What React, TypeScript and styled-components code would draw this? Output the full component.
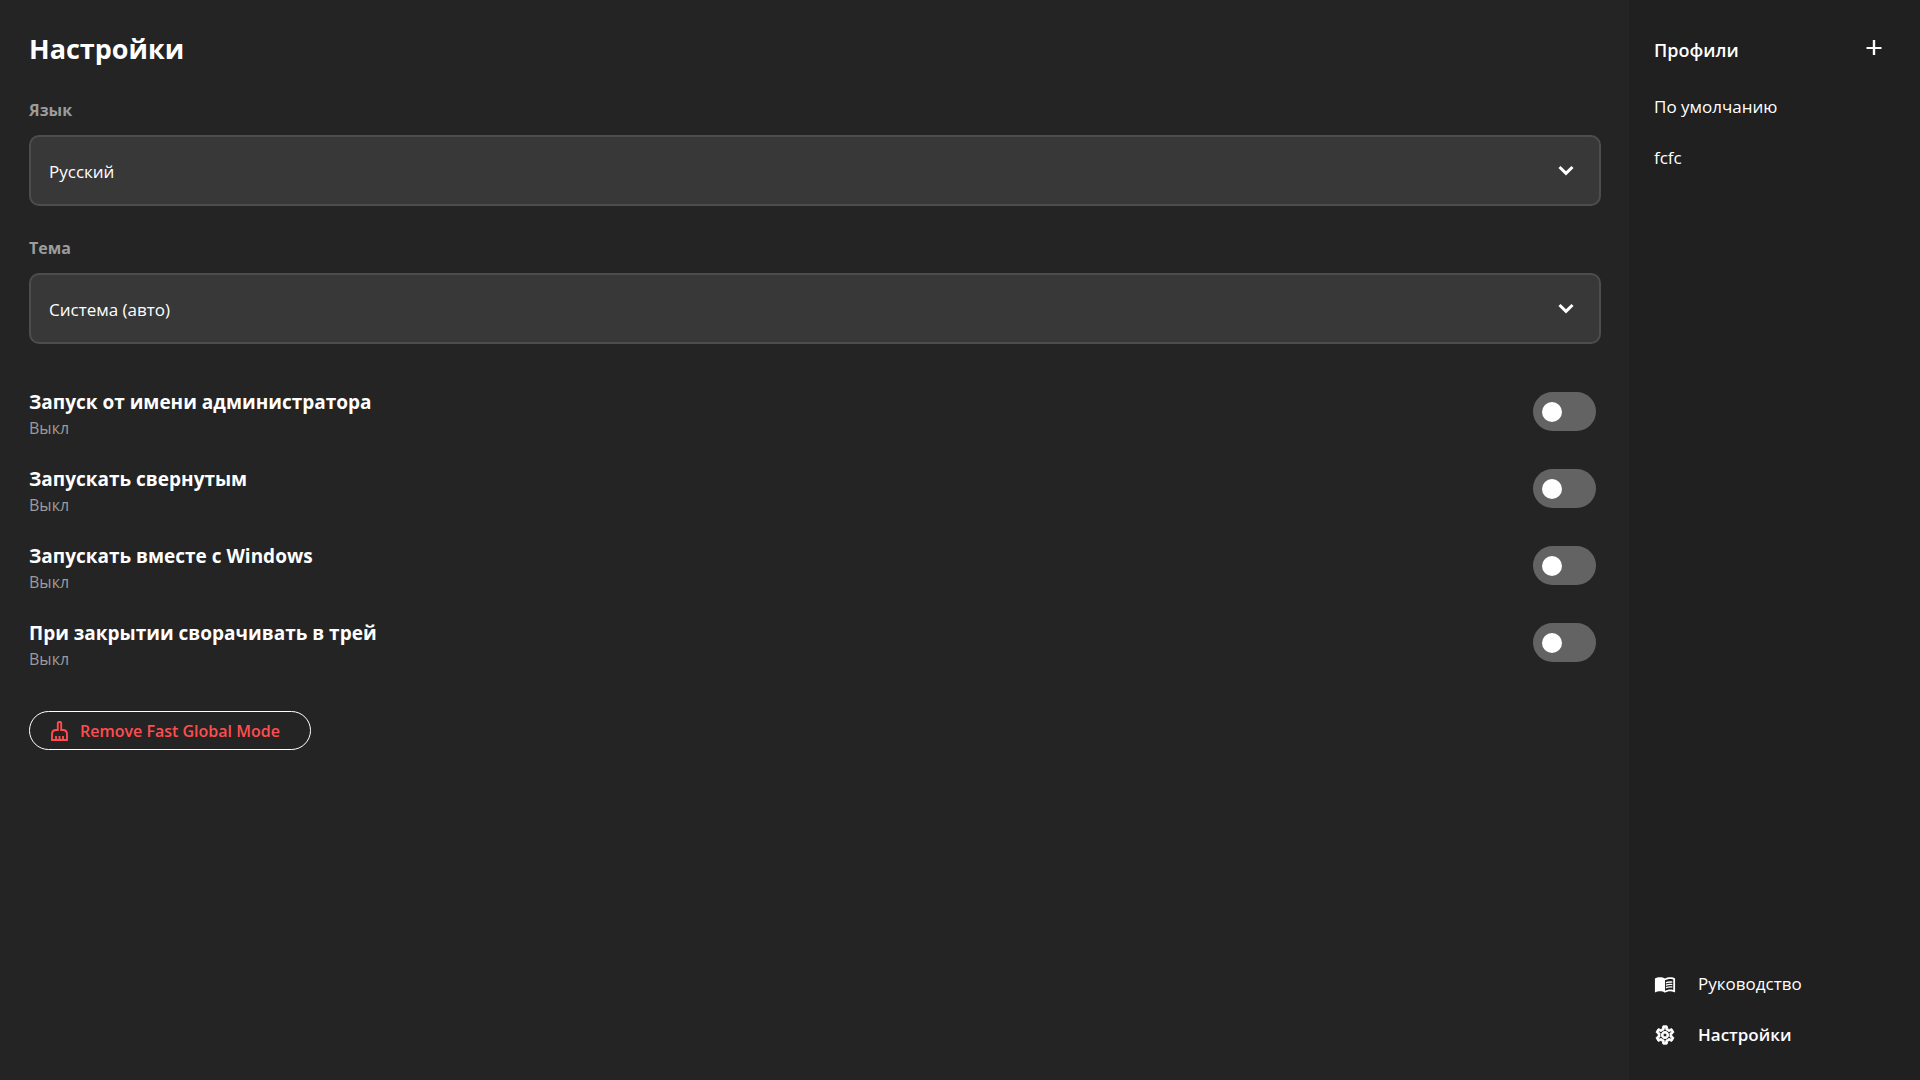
import React, { useState } from "react";
import styled, { createGlobalStyle } from "styled-components";
import { MdMenuBook, MdOutlineSettings } from "react-icons/md";

const GlobalStyle = createGlobalStyle`
  *, *::before, *::after { box-sizing: border-box; }
  body {
    margin: 0;
    background: #242424;
    color: #fff;
    font-family: "Open Sans", "Noto Sans", sans-serif;
    font-size: 17px;
    line-height: 24px;
  }
  button, select { font: inherit; color: inherit; }
`;

const Layout = styled.div`
  display: flex;
  min-height: 100vh;
`;

const Main = styled.main`
  flex: 1;
  min-width: 0;
  padding: 30px 28px 28px 29px;
`;

const Title = styled.h1`
  margin: 0;
  font-size: 27px;
  line-height: 38px;
  font-weight: 700;
`;

const Field = styled.div`
  display: flex;
  flex-direction: column;
  gap: 13px;
  margin-top: 30px;
`;

const FieldLabel = styled.label`
  color: #9c9c9c;
  font-size: 16px;
  font-weight: 700;
`;

const SelectBox = styled.div`
  display: grid;
  align-items: center;

  > * { grid-area: 1 / 1; }
  > svg {
    justify-self: end;
    margin-right: 27px;
    pointer-events: none;
  }
`;

const Select = styled.select`
  appearance: none;
  width: 100%;
  height: 71px;
  padding: 2px 64px 0 18px;
  border: 2px solid #4d4d4d;
  border-radius: 10px;
  background: #383838;
`;

const Toggles = styled.div`
  display: flex;
  flex-direction: column;
  gap: 25px;
  margin-top: 45px;
`;

const ToggleRow = styled.div`
  display: flex;
  align-items: flex-start;
  justify-content: space-between;
  padding-right: 5px;
`;

const ToggleText = styled.label`
  display: flex;
  flex-direction: column;
`;

const ToggleName = styled.span`
  font-size: 19px;
  line-height: 27px;
  font-weight: 700;
`;

const ToggleState = styled.span`
  color: #9c9c9c;
  font-size: 16px;
  line-height: 25px;
`;

const Switch = styled.input`
  appearance: none;
  display: flex;
  align-items: center;
  flex: none;
  width: 63px;
  height: 39px;
  margin: 3px 0 0;
  padding: 0 9px;
  border-radius: 20px;
  background: #636363;
  cursor: pointer;

  &::before {
    content: "";
    width: 20px;
    height: 20px;
    border-radius: 50%;
    background: #fff;
  }
  &:checked { justify-content: flex-end; background: #2f8f5b; }
`;

const RemoveButton = styled.button`
  display: inline-flex;
  align-items: center;
  gap: 12px;
  height: 39px;
  margin-top: 39px;
  padding: 0 30px 0 21px;
  border: 1px solid #fff;
  border-radius: 20px;
  background: transparent;
  color: #ff4d4f;
  font-size: 16px;
  font-weight: 600;
`;

const GearIcon = styled(MdOutlineSettings)`
  stroke-width: 1;

  path[fill="none"] { stroke: none; }
`;

const Sidebar = styled.aside`
  display: flex;
  flex-direction: column;
  flex: none;
  width: 291px;
  padding: 34px 25px 20px;
  background: #202020;
`;

const SidebarHead = styled.header`
  display: flex;
  align-items: center;
  justify-content: space-between;
`;

const SidebarTitle = styled.h2`
  margin: 0;
  font-size: 18px;
  line-height: 32px;
  font-weight: 600;
`;

const AddButton = styled.button`
  display: flex;
  padding: 4px;
  margin: 0 9px 4px 0;
  border: 0;
  background: none;
`;

const Profiles = styled.nav`
  display: flex;
  flex-direction: column;
  margin-top: 15px;
`;

const Footer = styled.nav`
  display: flex;
  flex-direction: column;
  margin-top: auto;
`;

const NavLink = styled.a<{ $active?: boolean }>`
  display: flex;
  align-items: center;
  gap: 22px;
  height: 51px;
  color: #fff;
  font-weight: ${({ $active }) => ($active ? 600 : 400)};
  text-decoration: none;
`;

const Chevron = () => (
  <svg width="16" height="11" viewBox="0 0 16 11" fill="none" stroke="#fff" strokeWidth="3" aria-hidden="true">
    <path d="M1.5 2 8 8.3 14.5 2" />
  </svg>
);

const Plus = () => (
  <svg width="16" height="16" viewBox="0 0 16 16" fill="none" stroke="#fff" aria-hidden="true">
    <path d="M8 0v15" strokeWidth="2.4" />
    <path d="M.5 8h15" strokeWidth="2" />
  </svg>
);

const Brush = () => (
  <svg width="17" height="20" viewBox="0 0 17 20" fill="none" stroke="currentColor" strokeWidth="1.9" aria-hidden="true">
    <path d="M6.8 9V2.2Q6.8 1 8 1h1q1.2 0 1.2 1.2V9h1.6Q16 9 16 13.4V19H1v-5.6Q1 9 5.2 9Z" />
    <path d="M5 15v4M8.5 15v4M12 15v4" />
  </svg>
);

const fields = [
  { id: "language", label: "Язык", options: ["Русский"] },
  { id: "theme", label: "Тема", options: ["Система (авто)"] },
];

const toggles = [
  { id: "admin", name: "Запуск от имени администратора" },
  { id: "minimized", name: "Запускать свернутым" },
  { id: "autostart", name: "Запускать вместе с Windows" },
  { id: "tray", name: "При закрытии сворачивать в трей" },
];

const Toggle = ({ id, name }: { id: string; name: string }) => {
  const [on, setOn] = useState(false);
  return (
    <ToggleRow>
      <ToggleText htmlFor={id}>
        <ToggleName>{name}</ToggleName>
        <ToggleState>{on ? "Вкл" : "Выкл"}</ToggleState>
      </ToggleText>
      <Switch id={id} type="checkbox" role="switch" checked={on} onChange={() => setOn(!on)} />
    </ToggleRow>
  );
};

export default function App() {
  return (
    <>
      <GlobalStyle />
      <Layout>
        <Main>
          <Title>Настройки</Title>
          {fields.map(({ id, label, options }) => (
            <Field key={id}>
              <FieldLabel htmlFor={id}>{label}</FieldLabel>
              <SelectBox>
                <Select id={id}>
                  {options.map((option) => (
                    <option key={option}>{option}</option>
                  ))}
                </Select>
                <Chevron />
              </SelectBox>
            </Field>
          ))}
          <Toggles>
            {toggles.map((toggle) => (
              <Toggle key={toggle.id} {...toggle} />
            ))}
          </Toggles>
          <RemoveButton type="button">
            <Brush />
            Remove Fast Global Mode
          </RemoveButton>
        </Main>
        <Sidebar>
          <SidebarHead>
            <SidebarTitle>Профили</SidebarTitle>
            <AddButton type="button" aria-label="Добавить профиль">
              <Plus />
            </AddButton>
          </SidebarHead>
          <Profiles>
            <NavLink href="#default">По умолчанию</NavLink>
            <NavLink href="#fcfc">fcfc</NavLink>
          </Profiles>
          <Footer>
            <NavLink href="#guide">
              <MdMenuBook size={22} aria-hidden="true" />
              Руководство
            </NavLink>
            <NavLink href="#settings" $active>
              <GearIcon size={22} aria-hidden="true" />
              Настройки
            </NavLink>
          </Footer>
        </Sidebar>
      </Layout>
    </>
  );
}
